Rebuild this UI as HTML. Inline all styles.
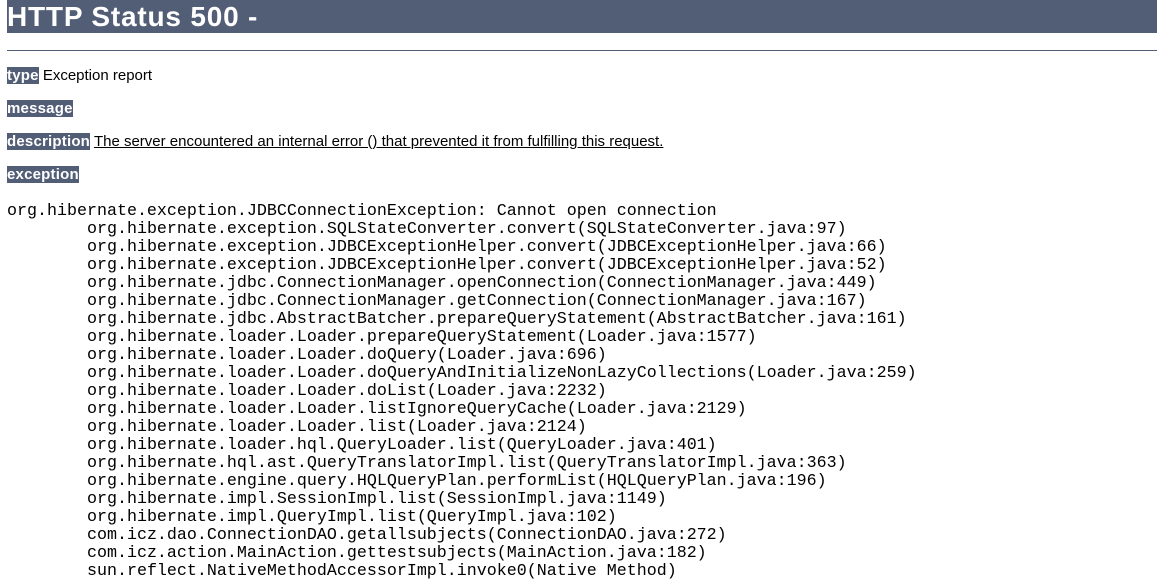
<!DOCTYPE html>
<html><head><meta charset="utf-8"><style>
body{margin:0;background:#fff;width:1157px;height:565px;overflow:hidden;position:relative;font-family:"Liberation Sans",sans-serif;}
.h1{position:absolute;left:7px;top:0;width:1150px;height:33px;background:#525D76;color:#fff;font-weight:bold;font-size:28px;line-height:33px;white-space:nowrap;letter-spacing:0.8px}
.hr{position:absolute;left:7px;top:50px;width:1150px;height:1px;background:#525D76}
.row{position:absolute;left:7px;font-size:15px;line-height:17px;white-space:nowrap;color:#000}
.lb{background:#525D76;color:#fff;font-weight:bold;letter-spacing:0.2px;display:inline-block;height:17px}
u{text-decoration:underline}
pre{position:absolute;left:7px;top:203px;margin:0;font-family:"Liberation Mono",monospace;font-size:16.67px;line-height:18px;color:#000}
</style></head><body>
<div class="h1">HTTP Status 500 -</div>
<div class="hr"></div>
<div class="row" style="top:67px"><span class="lb">type</span> Exception report</div>
<div class="row" style="top:100px"><span class="lb">message</span></div>
<div class="row" style="top:133px"><span class="lb">description</span> <u>The server encountered an internal error () that prevented it from fulfilling this request.</u></div>
<div class="row" style="top:166px"><span class="lb">exception</span></div>
<pre>org.hibernate.exception.JDBCConnectionException: Cannot open connection
	org.hibernate.exception.SQLStateConverter.convert(SQLStateConverter.java:97)
	org.hibernate.exception.JDBCExceptionHelper.convert(JDBCExceptionHelper.java:66)
	org.hibernate.exception.JDBCExceptionHelper.convert(JDBCExceptionHelper.java:52)
	org.hibernate.jdbc.ConnectionManager.openConnection(ConnectionManager.java:449)
	org.hibernate.jdbc.ConnectionManager.getConnection(ConnectionManager.java:167)
	org.hibernate.jdbc.AbstractBatcher.prepareQueryStatement(AbstractBatcher.java:161)
	org.hibernate.loader.Loader.prepareQueryStatement(Loader.java:1577)
	org.hibernate.loader.Loader.doQuery(Loader.java:696)
	org.hibernate.loader.Loader.doQueryAndInitializeNonLazyCollections(Loader.java:259)
	org.hibernate.loader.Loader.doList(Loader.java:2232)
	org.hibernate.loader.Loader.listIgnoreQueryCache(Loader.java:2129)
	org.hibernate.loader.Loader.list(Loader.java:2124)
	org.hibernate.loader.hql.QueryLoader.list(QueryLoader.java:401)
	org.hibernate.hql.ast.QueryTranslatorImpl.list(QueryTranslatorImpl.java:363)
	org.hibernate.engine.query.HQLQueryPlan.performList(HQLQueryPlan.java:196)
	org.hibernate.impl.SessionImpl.list(SessionImpl.java:1149)
	org.hibernate.impl.QueryImpl.list(QueryImpl.java:102)
	com.icz.dao.ConnectionDAO.getallsubjects(ConnectionDAO.java:272)
	com.icz.action.MainAction.gettestsubjects(MainAction.java:182)
	sun.reflect.NativeMethodAccessorImpl.invoke0(Native Method)
</pre>
</body></html>
